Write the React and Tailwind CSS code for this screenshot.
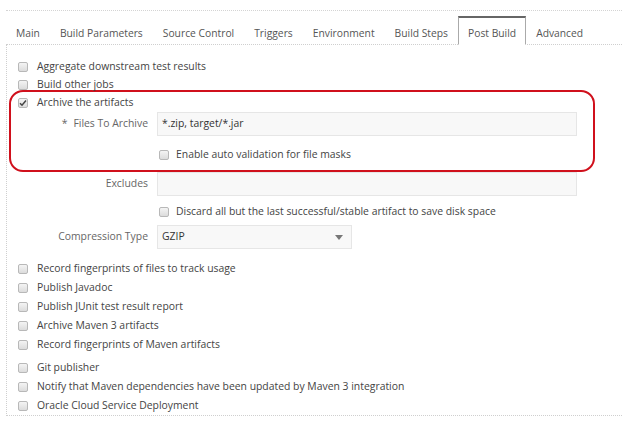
import React from 'react';

const tabs = ['Main', 'Build Parameters', 'Source Control', 'Triggers', 'Environment', 'Build Steps', 'Post Build', 'Advanced'];

const Box = ({ checked }) => (
  <span className="w-[10px] h-[10px] shrink-0 rounded-[2px] border border-[#b8b8b8] bg-gradient-to-b from-[#f4f4f4] to-[#dcdcdc] flex items-center justify-center">
    {checked && (
      <svg width="8" height="8" viewBox="0 0 8 8">
        <path d="M1 4.2 L3 6.2 L7 1.5" fill="none" stroke="#444" strokeWidth="1.5" />
      </svg>
    )}
  </span>
);

const Check = ({ label, checked, className = '' }) => (
  <div className={`flex items-center h-[19px] whitespace-nowrap ${className}`}>
    <div className="w-[30px] flex justify-center pl-[2px]">
      <Box checked={checked} />
    </div>
    <span>{label}</span>
  </div>
);

const Field = ({ label, star, children, className = '' }) => (
  <div className={`flex items-center ${className}`}>
    <div className="w-[150px] text-right pr-[9px] text-[#666] shrink-0 whitespace-nowrap">
      {star && <span className="mr-[6px]">*</span>}
      {label}
    </div>
    {children}
  </div>
);

const Input = ({ value, w = 'w-[420px]' }) => (
  <div className={`${w} h-[24px] border border-[#e6e6e6] bg-[#f8f8f8] flex items-center px-[4px] text-[#333]`}>
    {value}
  </div>
);

export default function App() {
  return (
    <div className="w-[628px] h-[426px] bg-white text-[#444] text-[10.4px] pt-[10px] px-[6px]" style={{ fontFamily: '"Open Sans", "Noto Sans", sans-serif' }}>
      <div className="border-t border-dotted border-[#d4d4d4]" />
      <div className="flex items-end h-[34px] border-b border-dotted border-[#cfcfcf] whitespace-nowrap text-[10.3px]">
        {tabs.map((t) =>
          t === 'Post Build' ? (
            <div key={t} className="h-[29px] px-[9px] pt-[6px] mb-[-1px] flex items-center border border-[#aaa] border-t-2 border-t-[#666] border-b-white bg-white text-[#555]">
              {t}
            </div>
          ) : (
            <div key={t} className="h-[28px] px-[10px] pt-[7px] flex items-center text-[#555]">
              {t}
            </div>
          )
        )}
      </div>
      <div className="border-l border-b border-dotted border-[#cfcfcf] h-[371px] pt-[12px] pr-[4px]">
        <Check label="Aggregate downstream test results" />
        <Check label="Build other jobs" className="-mt-[1px]" />
        <div className="mt-[-4px] ml-[2px] mr-[23px] border-2 border-[#d0101c] rounded-[14px] pb-[6px]">
          <Check label="Archive the artifacts" checked className="-ml-[4px] mt-[1px]" />
          <Field label="Files To Archive" star className="-ml-[4px]">
            <Input value="*.zip, target/*.jar" />
          </Field>
          <div className="flex items-center h-[19px] mt-[9px] ml-[143px] whitespace-nowrap">
            <div className="w-[20px] flex justify-center">
              <Box />
            </div>
            <span className="ml-[2px]">Enable auto validation for file masks</span>
          </div>
        </div>
        <Field label="Excludes">
          <Input value="" w="w-[420px]" />
        </Field>
        <div className="flex items-center h-[19px] mt-[6px] ml-[147px] whitespace-nowrap">
          <div className="w-[20px] flex justify-center">
            <Box />
          </div>
          <span className="ml-[2px]">Discard all but the last successful/stable artifact to save disk space</span>
        </div>
        <Field label="Compression Type" className="mt-[4px]">
          <div className="w-[195px] h-[24px] border border-[#e6e6e6] bg-[#f8f8f8] flex items-center justify-between px-[4px] text-[#333]">
            <span>GZIP</span>
            <svg width="8" height="5" viewBox="0 0 8 5" className="mr-[4px]">
              <path d="M0 0 L8 0 L4 5 Z" fill="#777" />
            </svg>
          </div>
        </Field>
        <div className="mt-[10px]">
          <Check label="Record fingerprints of files to track usage" />
          <Check label="Publish Javadoc" />
          <Check label="Publish JUnit test result report" />
          <Check label="Archive Maven 3 artifacts" />
          <Check label="Record fingerprints of Maven artifacts" />
          <Check label="Git publisher" className="mt-[4px]" />
          <Check label="Notify that Maven dependencies have been updated by Maven 3 integration" />
          <Check label="Oracle Cloud Service Deployment" />
        </div>
      </div>
    </div>
  );
}
